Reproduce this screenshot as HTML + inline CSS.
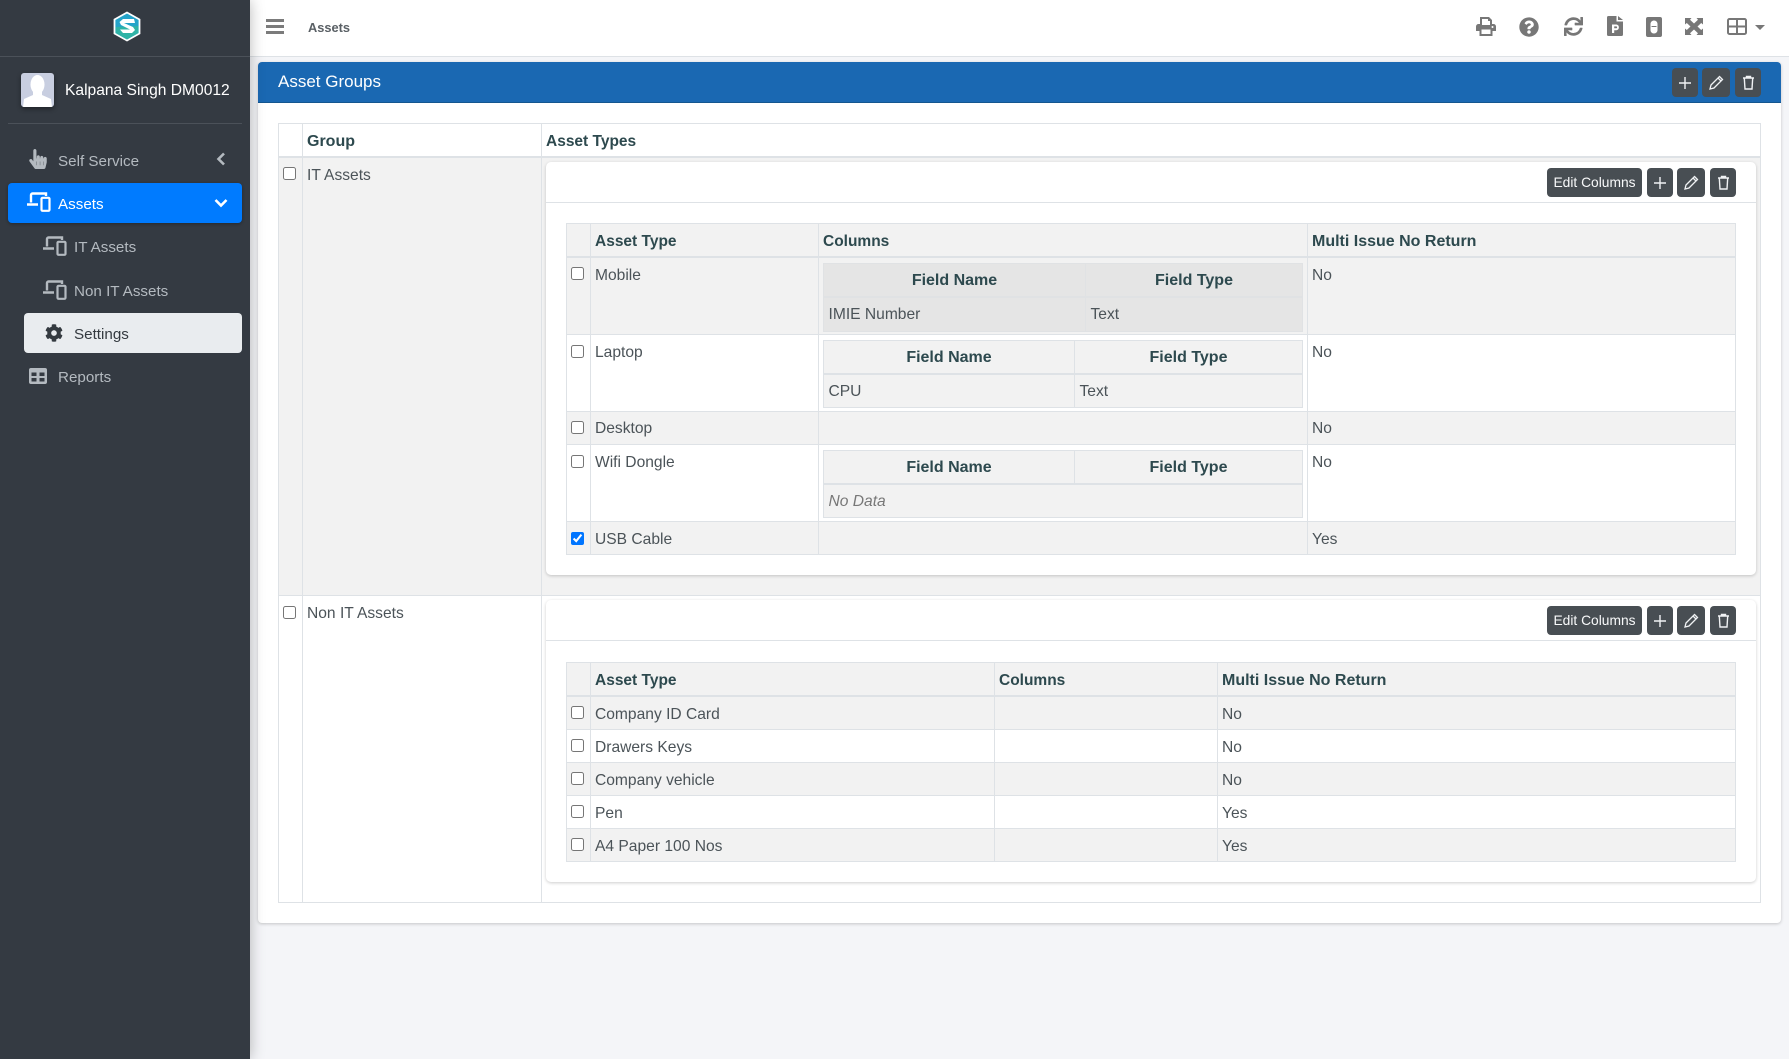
<!DOCTYPE html>
<html lang="en"><head><meta charset="utf-8"><title>Asset Groups</title>
<style>
*{box-sizing:border-box}
html,body{margin:0;padding:0;width:1789px;height:1059px;overflow:hidden;background:#f4f5f8;font-family:"Liberation Sans",sans-serif;font-size:16px;color:#4b5358}
svg{display:block;position:absolute}
.abs{position:absolute}
#side{position:absolute;left:0;top:0;width:250px;height:1059px;background:#343a42;box-shadow:0 0 14px rgba(0,0,0,.28);z-index:5;font-size:15.2px;color:#b4bac0}
#side .line{position:absolute;height:1px;background:#4b5159}
.nav{position:absolute;height:40px;line-height:43px;border-radius:4px;white-space:nowrap}
#top{position:absolute;left:250px;top:0;width:1539px;height:57px;background:#fff;border-bottom:1px solid #dee2e6}
#card{position:absolute;left:258px;top:62px;width:1523px;height:861px;background:#fff;border-radius:4px;box-shadow:0 1px 3px rgba(0,0,0,.2)}
#cardh{position:absolute;left:0;top:0;width:1523px;height:41px;background:#1a68b2;border-bottom:1px solid #14568f;border-radius:4px 4px 0 0;color:#fff;font-size:17px;line-height:39px;padding-left:20px}
.btn{position:absolute;height:29px;background:#484e53;border-radius:4px;color:#f8f9fa;font-size:13.8px;line-height:30px;text-align:center}
table{border-collapse:collapse;table-layout:fixed}
td,th{border:1px solid #dee2e6;padding:6px 4.5px 2px;line-height:24px;vertical-align:top;text-align:left;font-size:15.6px}
th{font-weight:700;color:#2d494e;border-bottom-width:2px;padding:6px 4.5px 1px;font-size:16px}
th.n{font-size:15.5px}
input{position:absolute;margin:0;width:13px;height:13px;left:4px;top:9.5px}
td.c{position:relative}
#outer{position:absolute;left:19.5px;top:61px;width:1483px}
.st{background:#f2f2f2}
.ic{position:absolute;left:288px;width:1210px;background:#fff;border-radius:5px;box-shadow:0 1px 3px rgba(0,0,0,.2)}
.ich{height:41px;border-bottom:1px solid #dee2e6;position:relative}
.it{position:absolute;left:19.5px;width:1170px}
.it th{background:#f2f2f2}
.sub{width:480px}
.sub th{text-align:center;padding:5px 4px 2px}
.sub td{padding:5px 4.5px 3px}
.m th,.m td{background:#e5e5e5;border-color:#e0e2e4}
.l th,.l td{background:#f2f2f2}
td.cols{padding:5px 4.5px 0}
</style></head><body>

<div id="side">
  <svg style="left:113px;top:11px" width="28" height="31" viewBox="0 0 28 31">
    <path d="M14 1.5 26.5 8.5V22.5L14 29.5 1.5 22.5V8.5Z" fill="#24a3c9" stroke="#fff" stroke-width="1.8"/>
    <path d="M2.6 16 2.6 22 14 28.5 25.4 22 25.4 15Z" fill="#2fb3a6"/>
    <path d="M21 8 10 8 6.5 11 8 14 17 18.5 7 18.5 10 22 19 22 22 19 20 16 11 12 22 12Z" fill="#fff"/>
  </svg>
  <div class="line" style="left:0;top:56px;width:250px"></div>
  <div class="abs" style="left:21px;top:73px;width:33px;height:34px;background:#c8cee0;border-radius:3px;box-shadow:0 2px 5px rgba(0,0,0,.4);overflow:hidden">
    <svg style="left:0;top:0" width="33" height="34" viewBox="0 0 33 34"><ellipse cx="16.5" cy="11.5" rx="7" ry="9.5" fill="#fff"/><path d="M12 18h9v4l9 4 1 8H2l1-8 9-4Z" fill="#fff"/></svg>
  </div>
  <div class="abs" style="left:65px;top:79px;line-height:24px;color:#fff;font-size:15.6px;white-space:nowrap">Kalpana Singh DM0012</div>
  <div class="line" style="left:8px;top:123px;width:234px"></div>

  <div class="nav" style="left:8px;top:140px;width:234px;padding-left:50px">Self Service</div>
  <svg style="left:29px;top:149px" width="18" height="20" viewBox="0 0 448 512"><path fill="#b4bac0" d="M448 240v96c0 3.084-.356 6.159-1.063 9.162l-32 136C410.686 499.23 394.562 512 376 512H168a40.004 40.004 0 0 1-32.35-16.473l-127.997-176c-12.993-17.866-9.043-42.883 8.822-55.876 17.867-12.994 42.884-9.043 55.877 8.823L104 315.992V40c0-22.091 17.908-40 40-40s40 17.909 40 40v200h8v-40c0-22.091 17.908-40 40-40s40 17.909 40 40v40h8v-24c0-22.091 17.908-40 40-40s40 17.909 40 40v24h8c0-22.091 17.908-40 40-40s40 17.909 40 40zm-256 80h-8v96h8v-96zm88 0h-8v96h8v-96zm88 0h-8v96h8v-96z"/></svg>
  <svg style="left:216px;top:152px" width="10" height="14" viewBox="0 0 10 14"><path d="M8 1.5 2.5 7 8 12.500" fill="none" stroke="#b4bac0" stroke-width="2.6"/></svg>

  <div class="nav" style="left:8px;top:183px;width:234px;padding-left:50px;background:#007bff;color:#fff;box-shadow:0 1px 3px rgba(0,0,0,.3)">Assets</div>
  <svg style="left:26px;top:192px" width="25" height="20" viewBox="0 0 25 20"><path d="M5 10.5V3a1.5 1.5 0 0 1 1.5-1.5H20V4M1 12.5h11" fill="none" stroke="#fff" stroke-width="2.4"/><rect x="15.5" y="5.8" width="8" height="13" rx="1" fill="none" stroke="#fff" stroke-width="2.2"/></svg>
  <svg style="left:214px;top:198px" width="14" height="10" viewBox="0 0 14 10"><path d="M1.5 2 7 7.5 12.5 2" fill="none" stroke="#fff" stroke-width="2.6"/></svg>

  <div class="nav" style="left:24px;top:226px;width:218px;padding-left:50px">IT Assets</div>
  <svg style="left:42px;top:236px" width="25" height="20" viewBox="0 0 25 20"><path d="M5 10.5V3a1.5 1.5 0 0 1 1.5-1.5H20V4M1 12.5h11" fill="none" stroke="#b4bac0" stroke-width="2.4"/><rect x="15.5" y="5.8" width="8" height="13" rx="1" fill="none" stroke="#b4bac0" stroke-width="2.2"/></svg>
  <div class="nav" style="left:24px;top:270px;width:218px;padding-left:50px">Non IT Assets</div>
  <svg style="left:42px;top:280px" width="25" height="20" viewBox="0 0 25 20"><path d="M5 10.5V3a1.5 1.5 0 0 1 1.5-1.5H20V4M1 12.5h11" fill="none" stroke="#b4bac0" stroke-width="2.4"/><rect x="15.5" y="5.8" width="8" height="13" rx="1" fill="none" stroke="#b4bac0" stroke-width="2.2"/></svg>

  <div class="nav" style="left:24px;top:313px;width:218px;padding-left:50px;background:#e9ecef;color:#343a40">Settings</div>
  <svg style="left:45px;top:324px" width="18" height="18" viewBox="0 0 512 512"><path fill="#343a40" d="M487.4 315.7l-42.6-24.6c4.3-23.2 4.3-47 0-70.2l42.6-24.6c4.9-2.8 7.1-8.6 5.5-14-11.1-35.6-30-67.8-54.7-94.6-3.8-4.1-10-5.1-14.8-2.3L380.8 110c-17.9-15.4-38.5-27.3-60.8-35.1V25.8c0-5.6-3.9-10.5-9.4-11.7-36.7-8.2-74.3-7.8-109.2 0-5.5 1.2-9.4 6.1-9.4 11.7V75c-22.2 7.9-42.8 19.8-60.8 35.1L88.7 85.5c-4.9-2.8-11-1.9-14.8 2.3-24.7 26.7-43.6 58.9-54.7 94.6-1.7 5.4.6 11.2 5.5 14L67.3 221c-4.3 23.2-4.3 47 0 70.2l-42.6 24.6c-4.9 2.8-7.1 8.6-5.5 14 11.1 35.6 30 67.8 54.7 94.6 3.8 4.1 10 5.1 14.8 2.3l42.6-24.6c17.9 15.4 38.5 27.3 60.8 35.1v49.2c0 5.6 3.9 10.5 9.4 11.7 36.7 8.2 74.3 7.8 109.2 0 5.5-1.2 9.4-6.1 9.4-11.7v-49.2c22.2-7.9 42.8-19.8 60.8-35.1l42.6 24.6c4.9 2.8 11 1.9 14.8-2.3 24.7-26.7 43.6-58.9 54.7-94.6 1.5-5.5-.7-11.3-5.6-14.1zM256 336c-44.1 0-80-35.9-80-80s35.9-80 80-80 80 35.9 80 80-35.9 80-80 80z"/></svg>

  <div class="nav" style="left:8px;top:356px;width:234px;padding-left:50px">Reports</div>
  <svg style="left:29px;top:368px" width="18" height="16" viewBox="0 0 18 16"><path fill="#b4bac0" fill-rule="evenodd" d="M2 0h14a2 2 0 0 1 2 2v12a2 2 0 0 1-2 2H2a2 2 0 0 1-2-2V2a2 2 0 0 1 2-2ZM2.5 4.5v3.5h5V4.500ZM10.500 4.500v3.500h5V4.500ZM2.500 10v3.500h5V10ZM10.500 10v3.500h5V10Z"/></svg>
</div>

<div id="top">
  <div class="abs" style="left:16px;top:19px;width:18px;height:3px;background:#7b7b7b"></div>
  <div class="abs" style="left:16px;top:25px;width:18px;height:3px;background:#7b7b7b"></div>
  <div class="abs" style="left:16px;top:31px;width:18px;height:3px;background:#7b7b7b"></div>
  <div class="abs" style="left:58px;top:18px;font-size:12.8px;font-weight:700;line-height:20px;color:#5a6065">Assets</div>
</div>
<!-- toolbar icons -->
<svg style="left:1476px;top:17px" width="20" height="19" viewBox="0 0 20 19"><path fill="#777" fill-rule="evenodd" d="M4 0h9l3 3v4h1.500A2.500 2.500 0 0 1 20 9.500V14h-3.500v5h-13v-5H0V9.500A2.500 2.500 0 0 1 2.500 7H4ZM6 2v6h8V4h-2V2ZM5.500 12.500v4.500h9v-4.500ZM16.500 9a1 1 0 1 0 .01 0Z"/></svg>
<svg style="left:1519px;top:17px" width="20" height="20" viewBox="0 0 512 512"><path fill="#777" d="M504 256c0 136.997-111.043 248-248 248S8 392.997 8 256C8 119.083 119.043 8 256 8s248 111.083 248 248zM262.655 90c-54.497 0-89.255 22.957-116.549 63.758-3.536 5.286-2.353 12.415 2.715 16.258l34.699 26.31c5.205 3.947 12.621 3.008 16.665-2.122 17.864-22.658 30.113-35.797 57.303-35.797 20.429 0 45.698 13.148 45.698 32.958 0 14.976-12.363 22.667-32.534 33.976C247.128 238.528 216 254.941 216 296v4c0 6.627 5.373 12 12 12h56c6.627 0 12-5.373 12-12v-1.333c0-28.462 83.186-29.647 83.186-106.667 0-58.002-60.165-102-116.531-102zM256 338c-25.365 0-46 20.635-46 46 0 25.364 20.635 46 46 46s46-20.636 46-46c0-25.365-20.635-46-46-46z"/></svg>
<svg style="left:1564px;top:17px" width="19" height="19" viewBox="0 0 512 512"><path fill="#777" d="M440.65 12.57l4 82.77A247.16 247.16 0 0 0 255.83 8C134.73 8 33.91 94.92 12.29 209.82A12 12 0 0 0 24.09 224h49.05a12 12 0 0 0 11.67-9.26 175.91 175.91 0 0 1 317-56.94l-101.46-4.86a12 12 0 0 0-12.57 12v47.41a12 12 0 0 0 12 12H500a12 12 0 0 0 12-12V12a12 12 0 0 0-12-12h-47.37a12 12 0 0 0-11.98 12.57zM255.83 432a175.61 175.61 0 0 1-146-77.8l101.8 4.87a12 12 0 0 0 12.57-12v-47.4a12 12 0 0 0-12-12H12a12 12 0 0 0-12 12V500a12 12 0 0 0 12 12h47.35a12 12 0 0 0 12-12.6l-4.15-82.57A247.17 247.17 0 0 0 255.83 504c121.11 0 221.93-86.92 243.55-201.82a12 12 0 0 0-11.8-14.18h-49.05a12 12 0 0 0-11.67 9.26A175.86 175.86 0 0 1 255.83 432z"/></svg>
<svg style="left:1607px;top:16px" width="16" height="20" viewBox="0 0 16 20"><path fill="#777" fill-rule="evenodd" d="M1.500 0H9.500V5.500H16V18.500A1.500 1.500 0 0 1 14.500 20H1.500A1.500 1.500 0 0 1 0 18.500V1.500A1.500 1.500 0 0 1 1.500 0ZM11 0 16 4H11ZM5 8.500V17H7.200V14.200H9.500A2.900 2.900 0 0 0 9.500 8.500ZM7.200 10.400H9.200A.9.9 0 0 1 9.200 12.300H7.200Z"/></svg>
<svg style="left:1646px;top:17px" width="16" height="20" viewBox="0 0 16 20"><path fill="#777" fill-rule="evenodd" d="M2 0H14A2 2 0 0 1 16 2V18A2 2 0 0 1 14 20H2A2 2 0 0 1 0 18V2A2 2 0 0 1 2 0ZM8 3.500C6 3.500 4.500 5 4.500 7V13C4.500 15 6 16.500 8 16.500S11.500 15 11.500 13V7C11.500 5 10 3.500 8 3.500ZM5.500 9H10.500V10H5.500Z"/></svg>
<svg style="left:1685px;top:18px" width="18" height="17" viewBox="0 0 18 17"><path fill="#777" d="M0 0H6.500L5 1.800 9 5.500 13 1.800 11.500 0H18V6.500L16.200 5 12.500 8.500 16.200 12 18 10.500V17H11.500L13 15.200 9 11.500 5 15.200 6.500 17H0V10.500L1.800 12 5.500 8.500 1.800 5 0 6.500Z"/></svg>
<svg style="left:1727px;top:18px" width="20" height="17" viewBox="0 0 20 17"><path fill="none" stroke="#777" stroke-width="2" d="M2.500 1H17.500A1.500 1.500 0 0 1 19 2.500V14.500A1.500 1.500 0 0 1 17.500 16H2.500A1.500 1.500 0 0 1 1 14.500V2.500A1.500 1.500 0 0 1 2.500 1ZM10 1V16M1 8.500H19"/></svg>
<svg style="left:1755px;top:25px" width="10" height="5" viewBox="0 0 10 5"><path fill="#777" d="M0 0H10L5 5Z"/></svg>

<div id="card">
  <div id="cardh">Asset Groups</div>
  <div class="btn" style="left:1414px;top:6px;width:26px"><svg style="left:6px;top:8px" width="14" height="14" viewBox="0 0 14 14"><path d="M7 1V13M1 7H13" stroke="#f0f2f4" stroke-width="1.400"/></svg></div>
  <div class="btn" style="left:1444px;top:6px;width:28px"><svg style="left:7px;top:7px" width="15" height="15" viewBox="0 0 15 15"><path d="M10.500 1.500 13.500 4.500 5 13 1 14 2 10ZM9 3 12 6" fill="none" stroke="#f0f2f4" stroke-width="1.300"/></svg></div>
  <div class="btn" style="left:1477px;top:6px;width:26px"><svg style="left:6.500px;top:7px" width="13" height="15" viewBox="0 0 13 15"><path d="M1 3H12M4.500 3V1.500H8.500V3M2.300 3 3 14H10L10.700 3" fill="none" stroke="#f0f2f4" stroke-width="1.400"/></svg></div>

  <table id="outer">
    <colgroup><col style="width:24px"><col style="width:239px"><col></colgroup>
    <tr style="height:33px"><th></th><th>Group</th><th class="n">Asset Types</th></tr>
    <tr class="st" style="height:439px"><td class="c"><input type="checkbox"></td><td>IT Assets</td><td></td></tr>
    <tr style="height:307px"><td class="c"><input type="checkbox"></td><td>Non IT Assets</td><td></td></tr>
  </table>

  <div class="ic" style="top:100px;height:413px">
    <div class="ich">
      <div class="btn" style="left:1001px;top:6px;width:95px">Edit Columns</div>
      <div class="btn" style="left:1101px;top:6px;width:26px"><svg style="left:6px;top:8px" width="14" height="14" viewBox="0 0 14 14"><path d="M7 1V13M1 7H13" stroke="#f0f2f4" stroke-width="1.400"/></svg></div>
      <div class="btn" style="left:1131px;top:6px;width:28px"><svg style="left:7px;top:7px" width="15" height="15" viewBox="0 0 15 15"><path d="M10.500 1.500 13.500 4.500 5 13 1 14 2 10ZM9 3 12 6" fill="none" stroke="#f0f2f4" stroke-width="1.300"/></svg></div>
      <div class="btn" style="left:1164px;top:6px;width:26px"><svg style="left:6.500px;top:7px" width="13" height="15" viewBox="0 0 13 15"><path d="M1 3H12M4.500 3V1.500H8.500V3M2.300 3 3 14H10L10.700 3" fill="none" stroke="#f0f2f4" stroke-width="1.400"/></svg></div>
    </div>
    <table class="it" style="top:61px">
      <colgroup><col style="width:24px"><col style="width:228px"><col style="width:489px"><col></colgroup>
      <tr style="height:33px"><th></th><th class="n">Asset Type</th><th class="n">Columns</th><th>Multi Issue No Return</th></tr>
      <tr class="st" style="height:78px"><td class="c"><input type="checkbox"></td><td>Mobile</td><td class="cols">
        <table class="sub m"><colgroup><col style="width:262px"><col></colgroup><tr style="height:34px"><th>Field Name</th><th>Field Type</th></tr><tr style="height:34px"><td>IMIE Number</td><td>Text</td></tr></table>
      </td><td>No</td></tr>
      <tr style="height:77px"><td class="c"><input type="checkbox"></td><td>Laptop</td><td class="cols">
        <table class="sub l"><colgroup><col style="width:251px"><col></colgroup><tr style="height:33px"><th>Field Name</th><th>Field Type</th></tr><tr style="height:34px"><td>CPU</td><td>Text</td></tr></table>
      </td><td>No</td></tr>
      <tr class="st" style="height:33px"><td class="c"><input type="checkbox" style="top:8.5px"></td><td style="padding-top:5px;padding-bottom:2px">Desktop</td><td></td><td style="padding-top:5px;padding-bottom:2px">No</td></tr>
      <tr style="height:77px"><td class="c"><input type="checkbox"></td><td>Wifi Dongle</td><td class="cols">
        <table class="sub"><colgroup><col style="width:251px"><col></colgroup><tr style="height:33px"><th>Field Name</th><th>Field Type</th></tr><tr class="st" style="height:34px"><td colspan="2" style="font-style:italic;color:#777">No Data</td></tr></table>
      </td><td>No</td></tr>
      <tr class="st" style="height:33px"><td class="c"><input type="checkbox" checked></td><td>USB Cable</td><td></td><td>Yes</td></tr>
    </table>
  </div>

  <div class="ic" style="top:538px;height:282px">
    <div class="ich">
      <div class="btn" style="left:1001px;top:6px;width:95px">Edit Columns</div>
      <div class="btn" style="left:1101px;top:6px;width:26px"><svg style="left:6px;top:8px" width="14" height="14" viewBox="0 0 14 14"><path d="M7 1V13M1 7H13" stroke="#f0f2f4" stroke-width="1.400"/></svg></div>
      <div class="btn" style="left:1131px;top:6px;width:28px"><svg style="left:7px;top:7px" width="15" height="15" viewBox="0 0 15 15"><path d="M10.500 1.500 13.500 4.500 5 13 1 14 2 10ZM9 3 12 6" fill="none" stroke="#f0f2f4" stroke-width="1.300"/></svg></div>
      <div class="btn" style="left:1164px;top:6px;width:26px"><svg style="left:6.500px;top:7px" width="13" height="15" viewBox="0 0 13 15"><path d="M1 3H12M4.500 3V1.500H8.500V3M2.300 3 3 14H10L10.700 3" fill="none" stroke="#f0f2f4" stroke-width="1.400"/></svg></div>
    </div>
    <table class="it" style="top:62px">
      <colgroup><col style="width:24px"><col style="width:404px"><col style="width:223px"><col></colgroup>
      <tr style="height:33px"><th></th><th class="n">Asset Type</th><th class="n">Columns</th><th>Multi Issue No Return</th></tr>
      <tr class="st" style="height:33px"><td class="c"><input type="checkbox"></td><td>Company ID Card</td><td></td><td>No</td></tr>
      <tr style="height:33px"><td class="c"><input type="checkbox"></td><td>Drawers Keys</td><td></td><td>No</td></tr>
      <tr class="st" style="height:33px"><td class="c"><input type="checkbox"></td><td>Company vehicle</td><td></td><td>No</td></tr>
      <tr style="height:33px"><td class="c"><input type="checkbox"></td><td>Pen</td><td></td><td>Yes</td></tr>
      <tr class="st" style="height:33px"><td class="c"><input type="checkbox"></td><td>A4 Paper 100 Nos</td><td></td><td>Yes</td></tr>
    </table>
  </div>
</div>
</body></html>
